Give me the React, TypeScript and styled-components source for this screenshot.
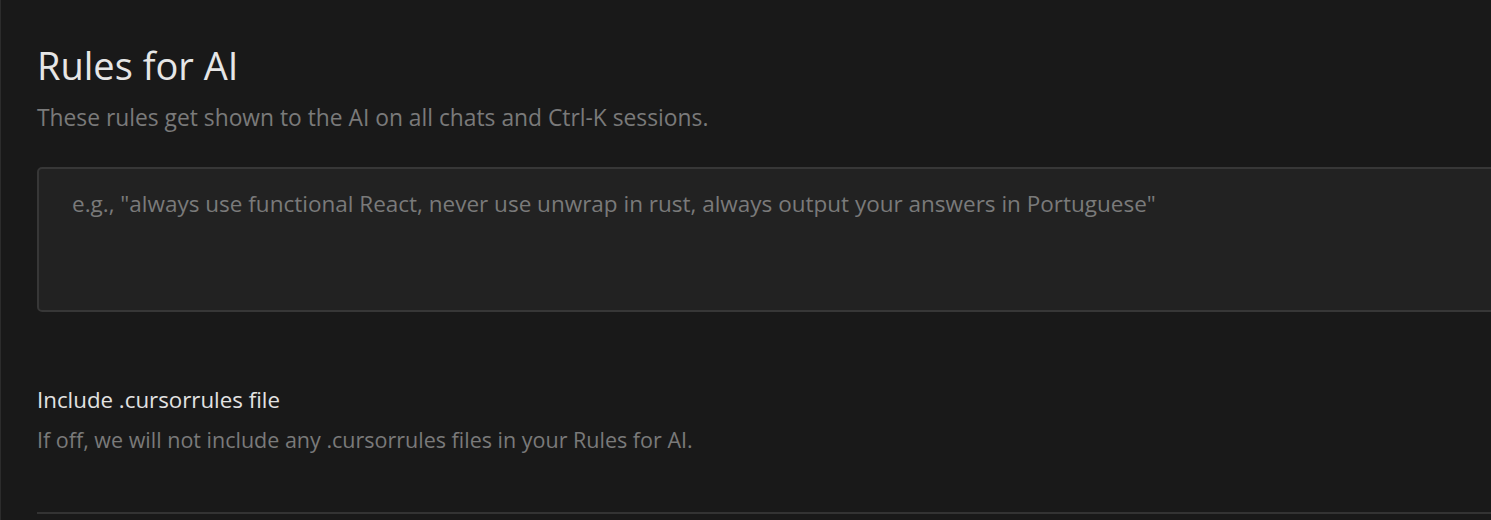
import React from "react";
import styled, { createGlobalStyle } from "styled-components";

const GlobalStyle = createGlobalStyle`
	html, body {
		margin: 0;
		padding: 0;
		background: #191919;
		overflow: hidden;
	}
	body {
		font-family: "Open Sans", "Noto Sans", sans-serif;
	}
`;

const Page = styled.div`
	height: 520px;
	border-left: 1px solid #2c2c2c;
	padding: 39px 0 0 36px;
	box-sizing: border-box;
	width: 1600px;
`;

const Title = styled.h1`
	margin: 0;
	font-size: 38px;
	font-weight: 400;
	line-height: 52px;
	color: #e6e6e6;
`;

const Subtitle = styled.p`
	margin: 11px 0 0;
	font-size: 22.8px;
	line-height: 32px;
	color: #7a7a7a;
`;

const RulesInput = styled.textarea`
	display: block;
	margin-top: 33px;
	width: 1560px;
	height: 145px;
	box-sizing: border-box;
	padding: 20px 33px;
	background: #222222;
	border: 2px solid #373737;
	border-radius: 5px;
	resize: none;
	outline: none;
	font-family: inherit;
	font-size: 22.5px;
	line-height: 30px;
	color: #d0d0d0;

	&::placeholder {
		color: #7a7a7a;
	}
`;

const Setting = styled.div`
	margin-top: 73px;
	padding-bottom: 57px;
	border-bottom: 2px solid #333333;
`;

const SettingLabel = styled.div`
	font-size: 22.3px;
	line-height: 30px;
	color: #e2e2e2;
`;

const SettingHint = styled.div`
	margin-top: 10px;
	font-size: 21.5px;
	line-height: 30px;
	color: #7a7a7a;
`;

export default function App() {
	return (
		<>
			<GlobalStyle />
			<Page>
				<Title>Rules for AI</Title>
				<Subtitle>These rules get shown to the AI on all chats and Ctrl-K sessions.</Subtitle>
				<RulesInput placeholder={'e.g., "always use functional React, never use unwrap in rust, always output your answers in Portuguese"'} />
				<Setting>
					<SettingLabel>Include .cursorrules file</SettingLabel>
					<SettingHint>If off, we will not include any .cursorrules files in your Rules for AI.</SettingHint>
				</Setting>
			</Page>
		</>
	);
}
